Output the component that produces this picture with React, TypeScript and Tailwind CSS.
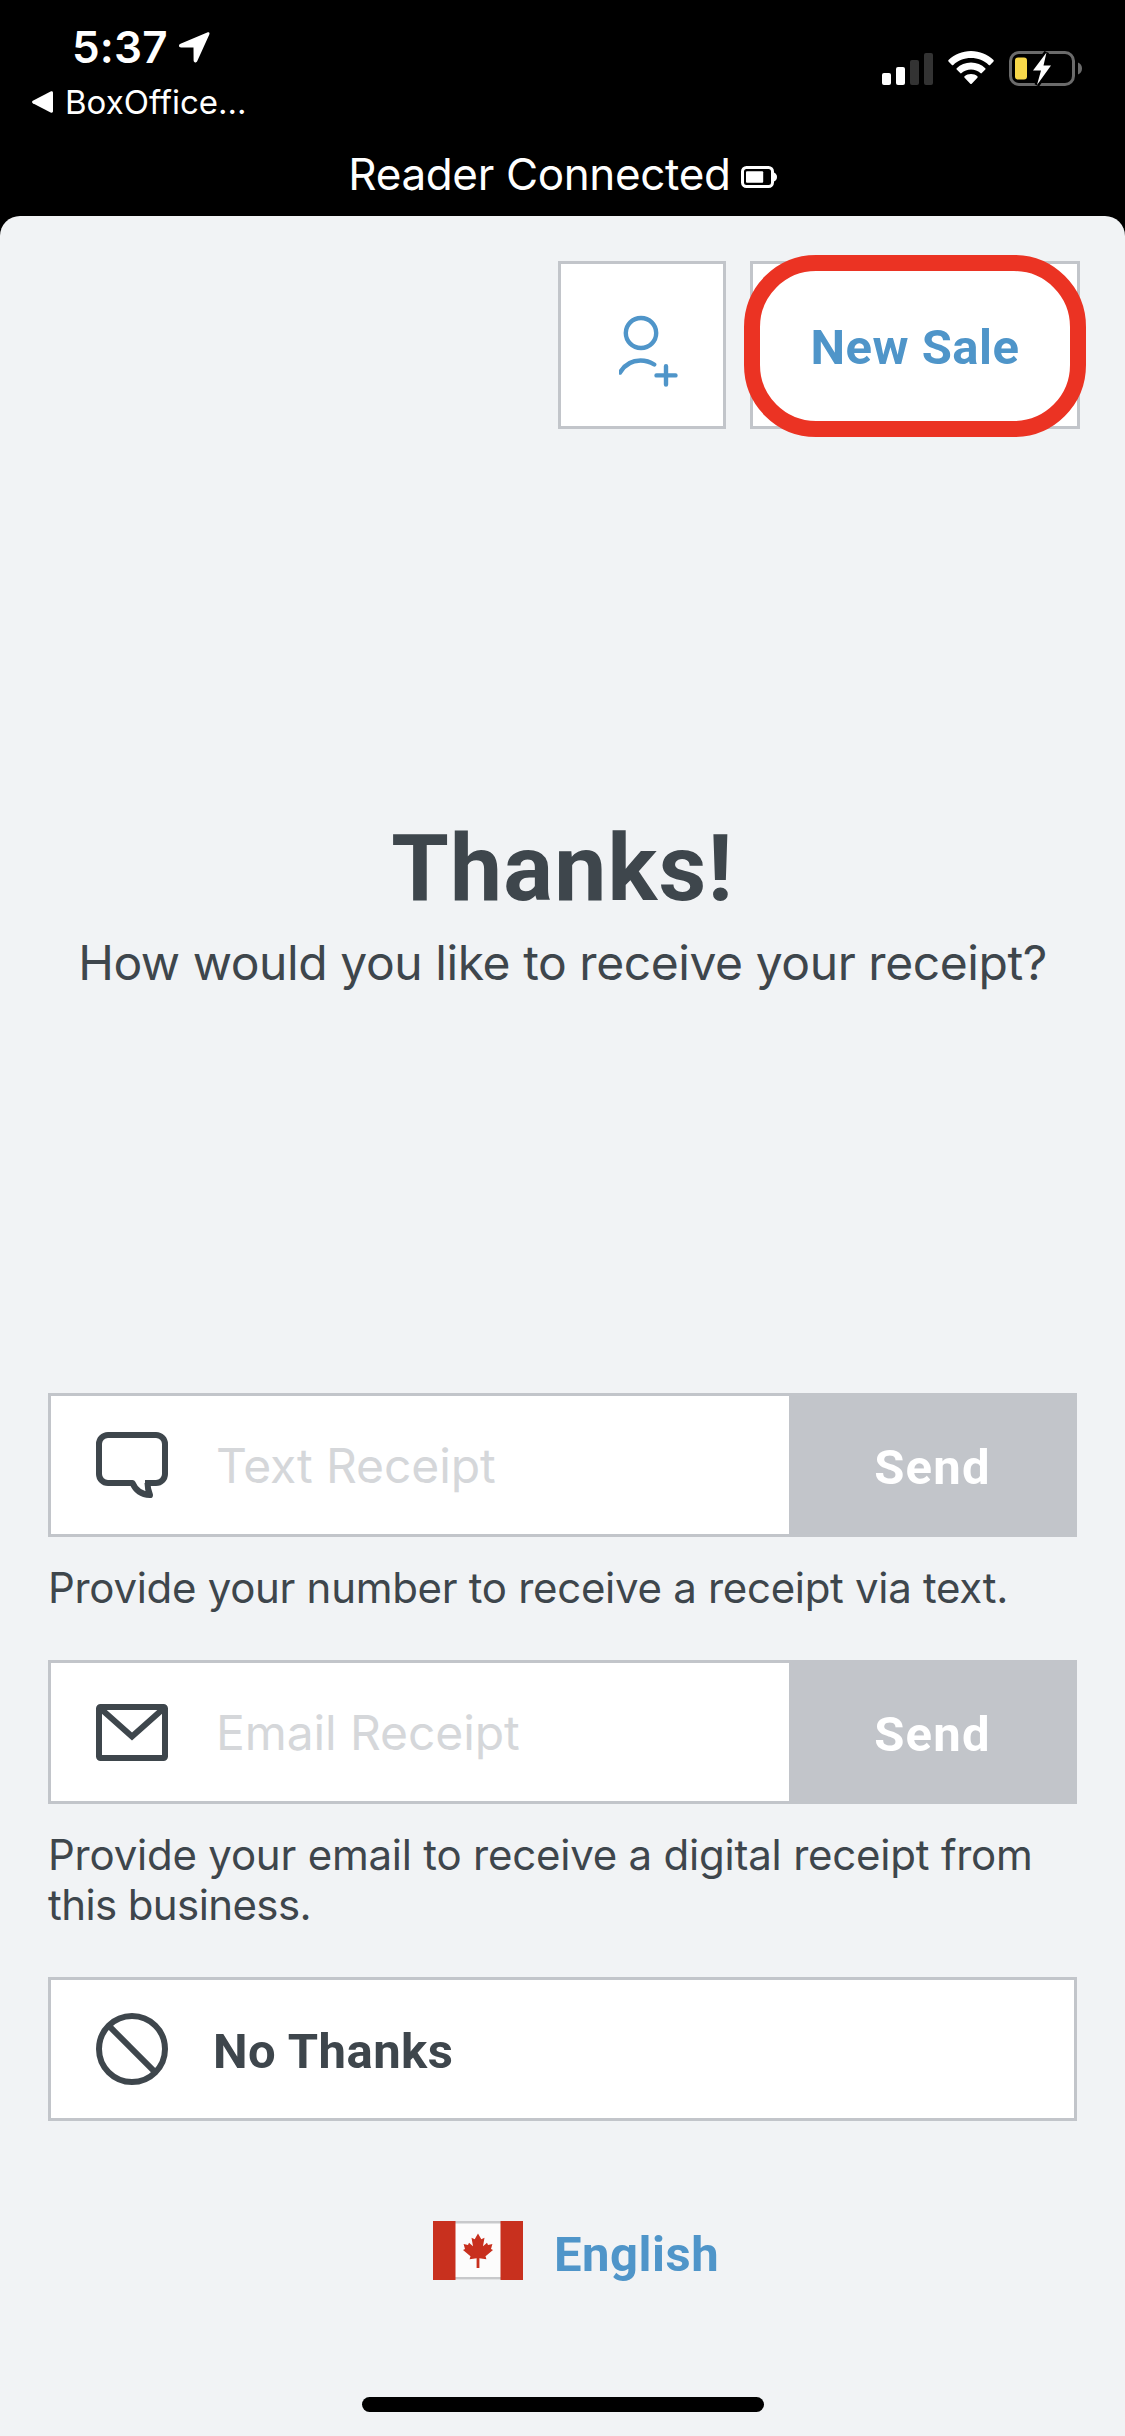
import React from "react";

interface ReceiptFieldProps {
  icon: React.ReactNode;
  placeholder: string;
  children: React.ReactNode;
}

function CellSignal() {
  return (
    <svg width="51" height="32" viewBox="0 0 51 32" className="shrink-0">
      <rect x="0" y="20" width="9" height="12" rx="2" fill="#fff" />
      <rect x="14" y="14" width="9" height="18" rx="2" fill="#fff" />
      <rect x="28" y="7" width="9" height="25" rx="2" fill="#333" />
      <rect x="42" y="0" width="9" height="32" rx="2" fill="#333" />
    </svg>
  );
}

function Wifi() {
  return (
    <svg width="46" height="34" viewBox="0 0 46 34" className="shrink-0">
      <path d="M23 0C14.2 0 6.3 3.5.5 9.1c-.4.4-.4 1 0 1.4l3.4 3.5c.4.4 1 .4 1.4 0C9.9 9.7 16.1 7.1 23 7.1s13.1 2.6 17.7 6.9c.4.4 1 .4 1.4 0l3.4-3.5c.4-.4.4-1 0-1.4C39.7 3.5 31.8 0 23 0Z" fill="#fff" />
      <path d="M23 11.5c-5.6 0-10.6 2.2-14.3 5.7-.4.4-.4 1 0 1.4l3.5 3.5c.4.4 1 .4 1.4 0 2.5-2.3 5.8-3.6 9.4-3.6s6.9 1.3 9.4 3.6c.4.4 1 .4 1.4 0l3.5-3.5c.4-.4.4-1 0-1.4C33.6 13.7 28.6 11.5 23 11.5Z" fill="#fff" />
      <path d="M23 23c-2.5 0-4.7.9-6.4 2.3-.5.4-.5 1 0 1.4l5.7 6c.4.4 1 .4 1.4 0l5.7-6c.4-.4.4-1 0-1.4C27.7 23.9 25.5 23 23 23Z" fill="#fff" />
    </svg>
  );
}

function PhoneBattery() {
  return (
    <svg width="74" height="36" viewBox="0 0 74 36" className="shrink-0">
      <rect x="1.5" y="1.5" width="63" height="32" rx="8.5" fill="none" stroke="#6b6b6b" strokeWidth="3" />
      <path d="M69 11.5c2.5.8 4 3.2 4 6s-1.5 5.2-4 6Z" fill="#6b6b6b" />
      <rect x="6" y="6.5" width="12" height="22" rx="3" fill="#f8d84a" />
      <path d="M37.5 1.5 24 19.5h8L28 34 42 14.5h-7.5Z" fill="#fff" stroke="#000" strokeWidth="5" paintOrder="stroke" />
    </svg>
  );
}

function ReaderBattery() {
  return (
    <svg width="36" height="22" viewBox="0 0 36 22" className="shrink-0">
      <rect x="1.5" y="1.5" width="30" height="19" rx="4" fill="none" stroke="#fff" strokeWidth="3" />
      <path d="M33 6.5c2 1 3 2.5 3 4.5s-1 3.5-3 4.5Z" fill="#fff" />
      <rect x="5" y="5.2" width="17.2" height="11.6" rx="1" fill="#fff" />
    </svg>
  );
}

function StatusBar() {
  return (
    <header className="h-[216px] shrink-0 text-white">
      <div className="flex h-[144px] items-start justify-between pl-[32px] pr-[42px]">
        <div className="pt-[23px]">
          <div className="flex items-center pl-[40px]">
            <span className="text-[44px] leading-[48px] font-semibold tracking-[0.2px]">5:37</span>
            <svg width="31" height="31" viewBox="0 0 31 31" className="ml-[11px]">
              <path d="M28.2.4 1.5 11.8c-2.3 1-1.8 3.6.6 3.6l12.4.1.1 12.8c0 2.5 2.7 2.8 3.7.6L30.2 2.8C31 .9 30.1-.4 28.2.4Z" fill="#fff" />
            </svg>
          </div>
          <div className="flex items-center pt-[11px]">
            <svg width="21" height="22" viewBox="0 0 21 22">
              <path d="M.8 9.8 18.6.6c1.5-.7 2.4 0 2.4 1.4v18c0 1.4-.9 2.1-2.4 1.4L.8 12.2C-.2 11.6-.2 10.4.8 9.8Z" fill="#fff" />
            </svg>
            <span className="ml-[12px] text-[33px] leading-[40px]">BoxOffice...</span>
          </div>
        </div>
        <div className="flex items-start pt-[51px]">
          <div className="mr-[15px] pt-[2px]">
            <CellSignal />
          </div>
          <Wifi />
          <div className="ml-[15px]">
            <PhoneBattery />
          </div>
        </div>
      </div>
      <div className="flex h-[60px] items-center justify-center">
        <span className="text-[44px] leading-[60px] tracking-[-0.35px]">Reader Connected</span>
        <div className="ml-[10px] pt-[6px]">
          <ReaderBattery />
        </div>
      </div>
    </header>
  );
}

function ReceiptField({ icon, placeholder, children }: ReceiptFieldProps) {
  return (
    <div className="mb-[47px]">
      <div className="flex h-[144px] border-[3px] border-[#c2c5ca] bg-white">
        <div className="flex flex-1 items-center pl-[45px]">
          {icon}
          <span className="ml-[48px] pt-[2px] text-[48px] leading-[60px] tracking-[-0.1px] text-[#d5d7da]">{placeholder}</span>
        </div>
        <button type="button" className="w-[285px] bg-[#c2c5ca] pt-[5px] pl-[2px] font-[Roboto,sans-serif] text-[49px] leading-[60px] font-bold tracking-[1.2px] text-white">
          Send
        </button>
      </div>
      <p className="mt-[26px] text-[42px] leading-[50px] tracking-[-0.3px]">{children}</p>
    </div>
  );
}

function BubbleIcon() {
  return (
    <svg width="72" height="72" viewBox="0 0 72 72" fill="none" stroke="#3e464c" strokeWidth="6" strokeLinejoin="round" className="shrink-0">
      <path d="M49 54H60a9 9 0 0 0 9-9V15a9 9 0 0 0-9-9H12a9 9 0 0 0-9 9v30a9 9 0 0 0 9 9H36.5C39 60 44 65.5 54 66 52.5 62.5 51.5 58.5 51.5 54" />
    </svg>
  );
}

function EnvelopeIcon() {
  return (
    <svg width="72" height="72" viewBox="0 0 72 72" fill="none" stroke="#3e464c" strokeWidth="6" className="shrink-0">
      <rect x="3" y="11" width="66" height="51" rx="1.5" />
      <path d="M4.5 12.5 36 40.5 67.5 12.5" />
    </svg>
  );
}

function NoIcon() {
  return (
    <svg width="72" height="72" viewBox="0 0 72 72" fill="none" stroke="#3e464c" strokeWidth="6" className="shrink-0">
      <circle cx="36" cy="36" r="33" />
      <path d="M12.7 12.7 59.3 59.3" />
    </svg>
  );
}

function AddCustomerIcon() {
  return (
    <svg width="60" height="72" viewBox="620 315 60 72" fill="none" stroke="#4f95c9" strokeWidth="4.4" strokeLinecap="round" strokeLinejoin="round">
      <ellipse cx="642" cy="333" rx="15.2" ry="15" />
      <path d="M621 372.5C625.5 365 633 360.5 641.5 360.5c5 0 9.5 1.3 13.7 4" />
      <path d="M657.5 375.4h19M667 366.3v18.3" />
    </svg>
  );
}

function CanadaFlag() {
  return (
    <svg width="90" height="59" viewBox="0 0 90 59" className="shrink-0">
      <rect width="90" height="59" fill="#fcfcfc" />
      <path d="M22 1.3h46M22 57.3h46" stroke="#c8c9cb" strokeWidth="2.6" />
      <path d="M0 0h22.5v59H0ZM67.5 0H90v59H67.5Z" fill="#c8301e" />
      <path d="M45 12.5 41.7 18.3 38.5 16.8 40 25.3 36 21.7 35 24 30.6 23 32 27.9 30 29 37.5 35.2 36.6 38.3 43.6 37.2V47h2.8V37.2L53.4 38.3 52.5 35.2 60 29 58 27.9 59.4 23 55 24 54 21.7 50 25.3 51.5 16.8 48.3 18.3Z" fill="#c8301e" />
    </svg>
  );
}

export default function App() {
  return (
    <div className="flex h-[2436px] w-[1125px] flex-col overflow-hidden bg-black font-[Inter,Roboto,sans-serif]">
      <StatusBar />
      <main className="flex flex-1 flex-col rounded-t-[20px] bg-[#f1f3f5] text-[#3e464c]">
        <div className="flex justify-end gap-[24px] pt-[45px] pr-[45px]">
          <button type="button" className="flex h-[168px] w-[168px] items-center justify-center border-[3px] border-[#c2c5ca] bg-white pt-[11px] pl-[14px]">
            <AddCustomerIcon />
          </button>
          <div className="relative">
            <button type="button" className="h-[168px] w-[330px] border-[3px] border-[#c2c5ca] bg-white pt-[5px] font-[Roboto,sans-serif] text-[49px] leading-[60px] font-bold tracking-[0.5px] text-[#4f95c9]">
              New Sale
            </button>
            {/* highlight ring around the button */}
            <div className="pointer-events-none absolute -top-[6px] -left-[6px] h-[182px] w-[342px] rounded-[72px] border-[16px] border-[#eb3323]" />
          </div>
        </div>

        <div className="mt-[384px] text-center">
          <h1 className="font-[Roboto,sans-serif] text-[93px] leading-[112px] font-bold tracking-[1.2px]">Thanks!</h1>
          <p className="mt-[8px] text-[48px] leading-[60px] tracking-[-0.43px]">How would you like to receive your receipt?</p>
        </div>

        <div className="mt-[400px] px-[48px]">
          <ReceiptField icon={<BubbleIcon />} placeholder="Text Receipt">
            Provide your number to receive a receipt via text.
          </ReceiptField>
          <ReceiptField icon={<EnvelopeIcon />} placeholder="Email Receipt">
            <span className="tracking-[-0.22px]">Provide your email to receive a digital receipt from</span>
            <br />
            <span className="tracking-[-0.6px]">this business.</span>
          </ReceiptField>
          <button type="button" className="flex h-[144px] w-full items-center border-[3px] border-[#c2c5ca] bg-white pl-[45px]">
            <NoIcon />
            <span className="ml-[45px] pt-[5px] font-[Roboto,sans-serif] text-[49px] leading-[60px] font-bold tracking-[0.5px]">No Thanks</span>
          </button>
        </div>

        <button type="button" className="mt-[100px] ml-[433px] flex items-center self-start">
          <CanadaFlag />
          <span className="ml-[31px] pt-[9px] font-[Roboto,sans-serif] text-[49px] leading-[50px] font-bold tracking-[0.5px] text-[#4f95c9]">English</span>
        </button>

        <div className="mt-auto mb-[24px] ml-[362px] h-[15px] w-[402px] rounded-full bg-black" />
      </main>
    </div>
  );
}
